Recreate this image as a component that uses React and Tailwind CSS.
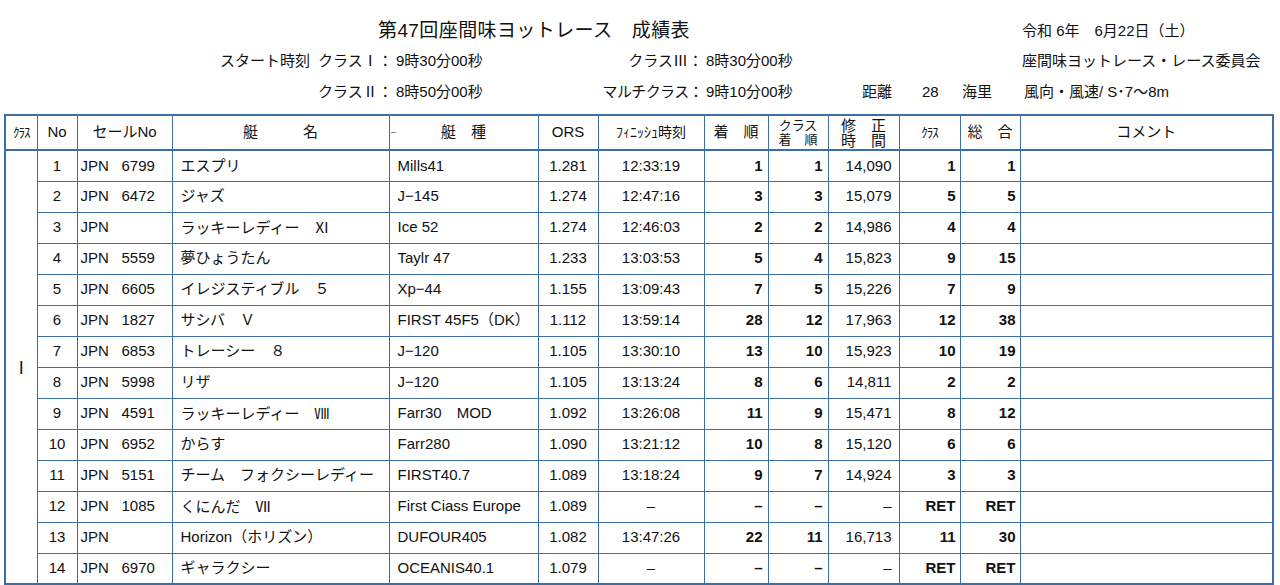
import React from 'react';

const rows = [
  { no: 1, sail: '6799', name: 'エスプリ', type: 'Mills41', ors: '1.281', fin: '12:33:19', arr: '1', carr: '1', corr: '14,090', cls: '1', tot: '1' },
  { no: 2, sail: '6472', name: 'ジャズ', type: 'J−145', ors: '1.274', fin: '12:47:16', arr: '3', carr: '3', corr: '15,079', cls: '5', tot: '5' },
  { no: 3, sail: '', name: 'ラッキーレディー　Ⅺ', type: 'Ice 52', ors: '1.274', fin: '12:46:03', arr: '2', carr: '2', corr: '14,986', cls: '4', tot: '4' },
  { no: 4, sail: '5559', name: '夢ひょうたん', type: 'Taylr 47', ors: '1.233', fin: '13:03:53', arr: '5', carr: '4', corr: '15,823', cls: '9', tot: '15' },
  { no: 5, sail: '6605', name: 'イレジスティブル　５', type: 'Xp−44', ors: '1.155', fin: '13:09:43', arr: '7', carr: '5', corr: '15,226', cls: '7', tot: '9' },
  { no: 6, sail: '1827', name: 'サシバ　Ｖ', type: 'FIRST 45F5（DK）', ors: '1.112', fin: '13:59:14', arr: '28', carr: '12', corr: '17,963', cls: '12', tot: '38' },
  { no: 7, sail: '6853', name: 'トレーシー　８', type: 'J−120', ors: '1.105', fin: '13:30:10', arr: '13', carr: '10', corr: '15,923', cls: '10', tot: '19' },
  { no: 8, sail: '5998', name: 'リザ', type: 'J−120', ors: '1.105', fin: '13:13:24', arr: '8', carr: '6', corr: '14,811', cls: '2', tot: '2' },
  { no: 9, sail: '4591', name: 'ラッキーレディー　Ⅷ', type: 'Farr30　MOD', ors: '1.092', fin: '13:26:08', arr: '11', carr: '9', corr: '15,471', cls: '8', tot: '12' },
  { no: 10, sail: '6952', name: 'からす', type: 'Farr280', ors: '1.090', fin: '13:21:12', arr: '10', carr: '8', corr: '15,120', cls: '6', tot: '6' },
  { no: 11, sail: '5151', name: 'チーム　フォクシーレディー', type: 'FIRST40.7', ors: '1.089', fin: '13:18:24', arr: '9', carr: '7', corr: '14,924', cls: '3', tot: '3' },
  { no: 12, sail: '1085', name: 'くにんだ　Ⅶ', type: 'First Ciass Europe', ors: '1.089', fin: '–', arr: '–', carr: '–', corr: '–', cls: 'RET', tot: 'RET' },
  { no: 13, sail: '', name: 'Horizon（ホリズン）', type: 'DUFOUR405', ors: '1.082', fin: '13:47:26', arr: '22', carr: '11', corr: '16,713', cls: '11', tot: '30' },
  { no: 14, sail: '6970', name: 'ギャラクシー', type: 'OCEANIS40.1', ors: '1.079', fin: '–', arr: '–', carr: '–', corr: '–', cls: 'RET', tot: 'RET' },
];

const td = 'border border-[#3d6fa6] p-0 h-[31px] whitespace-nowrap';
const th = 'border border-[#3d6fa6] border-b-2 p-0 font-normal whitespace-nowrap';

// roman numerals look right only in the CJK face
const Jp = ({ children }) => {
  const parts = String(children).split(/([Ⅰ-Ⅻ])/);
  return parts.map((p, i) =>
    /[Ⅰ-Ⅻ]/.test(p) ? (
      <span key={i} className="font-['Noto_Sans_CJK_JP',sans-serif]">{p}</span>
    ) : (
      <React.Fragment key={i}>{p}</React.Fragment>
    )
  );
};

export default function App() {
  return (
    <div className="w-[1280px] h-[585px] overflow-hidden bg-white text-[#111] font-['Liberation_Sans','Noto_Sans_CJK_JP',sans-serif]">
      {/* heading block */}
      <div className="h-[114px] pt-[17px] text-[15px] leading-[30px] whitespace-nowrap">
        <div className="flex h-[28px] items-center">
          <div className="w-[378px] shrink-0" />
          <div className="w-[644px] shrink-0 text-[19px] tracking-[0.4px]">第47回座間味ヨットレース　成績表</div>
          <div className="text-[15px]">令和 6年　6月22日（土）</div>
        </div>
        <div className="flex h-[31px] items-center">
          <div className="w-[220px] shrink-0" />
          <div className="w-[98px] shrink-0">スタート時刻</div>
          <div className="w-[78px] shrink-0"><Jp>クラスⅠ：</Jp></div>
          <div className="w-[200px] shrink-0">9時30分00秒</div>
          <div className="w-[110px] shrink-0 text-right pr-[3px]"><Jp>クラスⅢ：</Jp></div>
          <div className="w-[316px] shrink-0">8時30分00秒</div>
          <div>座間味ヨットレース・レース委員会</div>
        </div>
        <div className="flex h-[31px] items-center">
          <div className="w-[318px] shrink-0" />
          <div className="w-[78px] shrink-0"><Jp>クラスⅡ：</Jp></div>
          <div className="w-[200px] shrink-0">8時50分00秒</div>
          <div className="w-[110px] shrink-0 text-right pr-[3px] tracking-[-0.6px]">マルチクラス：</div>
          <div className="w-[156px] shrink-0">9時10分00秒</div>
          <div className="w-[60px] shrink-0">距離</div>
          <div className="w-[40px] shrink-0">28</div>
          <div className="w-[62px] shrink-0">海里</div>
          <div>風向・風速/ S･7～8m</div>
        </div>
      </div>

      {/* results table */}
      <div className="pl-[4px]">
        <table className="w-[1270px] table-fixed border-collapse border-2 border-[#3d6fa6] text-[15px]">
          <colgroup>
            <col className="w-[32px]" />
            <col className="w-[40px]" />
            <col className="w-[95px]" />
            <col className="w-[217px]" />
            <col className="w-[149px]" />
            <col className="w-[60px]" />
            <col className="w-[106px]" />
            <col className="w-[64px]" />
            <col className="w-[60px]" />
            <col className="w-[71px]" />
            <col className="w-[61px]" />
            <col className="w-[60px]" />
            <col />
          </colgroup>
          <thead>
            <tr className="h-[35px]">
              <th className={th + ' text-[13px] tracking-[-1px]'}>ｸﾗｽ</th>
              <th className={th}>No</th>
              <th className={th}>セールNo</th>
              <th className={th}>艇　　　名</th>
              <th className={th + ' relative'}>
                <span className="absolute left-[1px] top-[16px] h-px w-[5px] bg-[#888]" />
                艇　種
              </th>
              <th className={th}>ORS</th>
              <th className={th + ' text-[14px]'}>ﾌｨﾆｯｼｭ時刻</th>
              <th className={th}>着　順</th>
              <th className={th + ' text-[13px] leading-[14px]'}>
                <div>クラス</div>
                <div>着　順</div>
              </th>
              <th className={th + ' text-[15px] leading-[15px]'}>
                <div>修　正</div>
                <div>時　間</div>
              </th>
              <th className={th + ' text-[13px] tracking-[-1px]'}>ｸﾗｽ</th>
              <th className={th}>総　合</th>
              <th className={th + ' font-bold'}>コメント</th>
            </tr>
          </thead>
          <tbody>
            {rows.map((r, i) => (
              <tr key={r.no}>
                {i === 0 && (
                  <td rowSpan={14} className={td + " text-center text-[17px] font-['Noto_Sans_CJK_JP',sans-serif]"}>Ⅰ</td>
                )}
                <td className={td + ' text-center'}>{r.no}</td>
                <td className={td + ' pl-[3px]'}>
                  <div className="flex">
                    <span className="w-[41px]">JPN</span>
                    <span>{r.sail}</span>
                  </div>
                </td>
                <td className={td + ' pl-[8px]'}><Jp>{r.name}</Jp></td>
                <td className={td + ' pl-[8px]'}>{r.type}</td>
                <td className={td + ' text-center'}>{r.ors}</td>
                <td className={td + ' text-center'}>{r.fin}</td>
                <td className={td + ' text-right pr-[5px] font-bold'}>{r.arr}</td>
                <td className={td + ' text-right pr-[5px] font-bold'}>{r.carr}</td>
                <td className={td + ' text-right pr-[7px]'}>{r.corr}</td>
                <td className={td + ' text-right pr-[4px] font-bold'}>{r.cls}</td>
                <td className={td + ' text-right pr-[4px] font-bold'}>{r.tot}</td>
                <td className={td}></td>
              </tr>
            ))}
          </tbody>
          <tbody className="border-t-[3px] border-[#3d6fa6]">
            <tr>
              {Array.from({ length: 13 }).map((_, k) => (
                <td key={k} className={td}></td>
              ))}
            </tr>
          </tbody>
        </table>
      </div>
    </div>
  );
}
